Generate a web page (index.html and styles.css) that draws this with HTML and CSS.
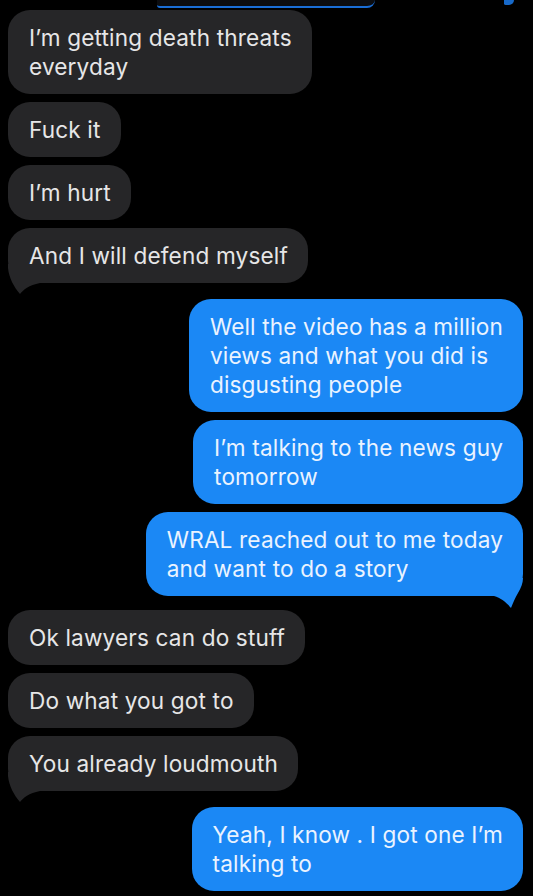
FILE: index.html
```html
<!DOCTYPE html>
<html lang="en">
<head>
<meta charset="utf-8">
<title>Messages</title>
<link rel="stylesheet" href="styles.css">
</head>
<body>
<div class="thread">
  <div class="prev">
    <div class="prev-bubble"></div>
    <div class="prev-tail"></div>
  </div>

  <div class="group">
    <div class="bubble in">I’m getting death threats<br>everyday</div>
    <div class="bubble in">Fuck it</div>
    <div class="bubble in">I’m hurt</div>
    <div class="bubble in tailed">And I will defend myself
      <svg class="tail tail-in" viewBox="0 0 32 30" width="32" height="30"><path d="M0 0 L0 4 C1 14 6 23 12 30 C15 26 21 21 32 19 L32 0 Z"/></svg>
    </div>
  </div>

  <div class="group out-group">
    <div class="bubble out">Well the video has a million<br>views and what you did is<br>disgusting people</div>
    <div class="bubble out">I’m talking to the news guy<br>tomorrow</div>
    <div class="bubble out tailed">WRAL reached out to me today<br>and want to do a story
      <svg class="tail tail-out" viewBox="0 0 32 30" width="32" height="30"><path d="M3 18 C10 20 16 25 20 30 C22 25 24 20 27 15 C30 10 32 5 32 0 L3 0 Z"/></svg>
    </div>
  </div>

  <div class="group after-out">
    <div class="bubble in">Ok lawyers can do stuff</div>
    <div class="bubble in">Do what you got to</div>
    <div class="bubble in tailed">You already loudmouth
      <svg class="tail tail-in" viewBox="0 0 32 30" width="32" height="30"><path d="M0 0 L0 4 C1 14 6 23 12 30 C15 26 21 21 32 19 L32 0 Z"/></svg>
    </div>
  </div>

  <div class="group out-group">
    <div class="bubble out">Yeah, I know . I got one I’m<br>talking to</div>
  </div>
</div>
</body>
</html>
```

FILE: styles.css
```css
html, body {
  margin: 0;
  padding: 0;
  background: #000;
}

body {
  width: 533px;
  height: 896px;
  overflow: hidden;
  font-family: "Inter", "Liberation Sans", sans-serif;
}

.thread {
  display: flex;
  flex-direction: column;
  padding: 0 10px 0 8px;
}

.prev {
  position: relative;
  height: 8px;
  margin-bottom: 2px;
}

.prev-bubble {
  margin-left: 149px;
  width: 218px;
  height: 6px;
  background: #0c0d10;
  border-bottom: 2px solid #1a6ed6;
  border-bottom-right-radius: 16px;
  border-bottom-left-radius: 6px;
}

.prev-tail {
  position: absolute;
  left: 496px;
  top: 0;
  width: 10px;
  height: 5px;
  background: #1769c9;
  border-bottom-right-radius: 8px;
  border-bottom-left-radius: 3px;
}

.group {
  display: flex;
  flex-direction: column;
  align-items: flex-start;
  gap: 8px;
}

.group + .group {
  margin-top: 16px;
}

.out-group {
  align-items: flex-end;
}

.group.after-out {
  margin-top: 14px;
}

.bubble {
  position: relative;
  white-space: nowrap;
  font-size: 22.6px;
  line-height: 29px;
  padding: 13px 20px 13px 21px;
  border-radius: 22px;
  letter-spacing: 0.15px;
}

.in {
  background: #262628;
  color: #e6e6e7;
}

.out {
  background: #1b88f5;
  color: #eaf3ff;
}

.tail {
  position: absolute;
  pointer-events: none;
}

.tail-in {
  left: 0;
  bottom: -11px;
  fill: #262628;
}

.tail-out {
  right: 0;
  bottom: -12px;
  fill: #1b88f5;
}
```
